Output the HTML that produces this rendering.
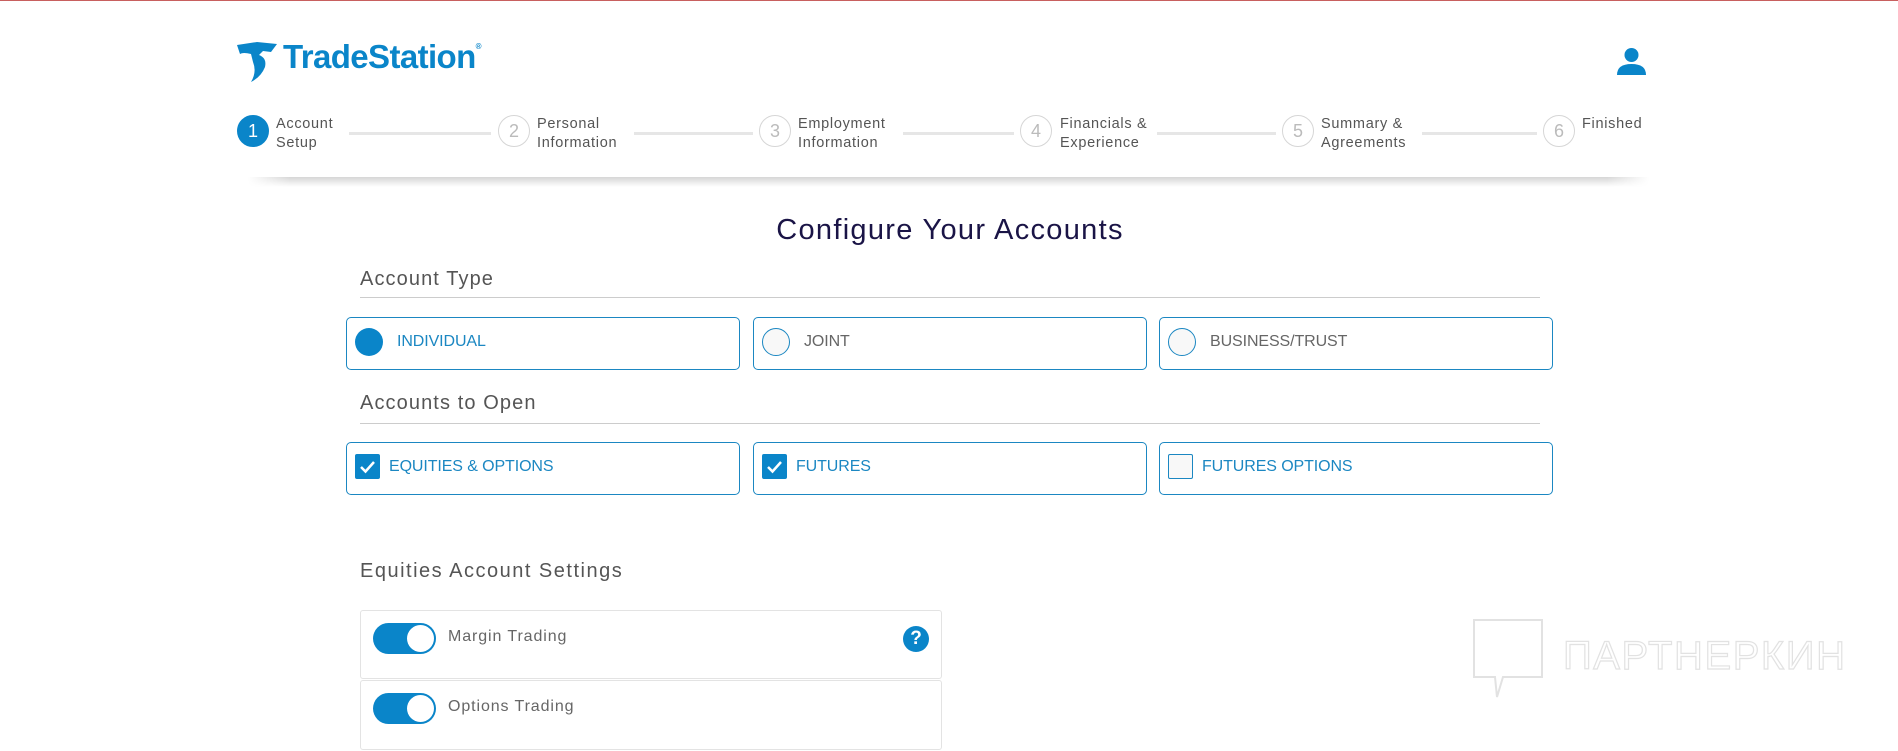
<!DOCTYPE html>
<html><head><meta charset="utf-8"><style>
*{margin:0;padding:0;box-sizing:border-box}
body{width:1898px;height:751px;background:#fff;position:relative;overflow:hidden;font-family:"Liberation Sans",sans-serif;color:#555}
.a{position:absolute}
.sh{left:248px;top:177px;width:1401px;height:10px;background:linear-gradient(rgba(0,0,0,.16),rgba(0,0,0,0));-webkit-mask-image:linear-gradient(90deg,transparent,#000 3%,#000 97%,transparent);mask-image:linear-gradient(90deg,transparent,#000 3%,#000 97%,transparent)}
.c{width:32px;height:32px;border-radius:50%;border:1px solid #d6d6d6;color:#bbb;font-size:18px;text-align:center;line-height:30px;top:115px}
.lab{top:115px;font-size:14.5px;line-height:19px;color:#555;letter-spacing:.7px}
.ln{top:132px;height:3px;background:#e6e6e6}
.h{font-size:20px;color:#555;left:360px;letter-spacing:1.1px}
.rule{left:360px;width:1180px;height:1px;background:#ccc}
.box{border:1.5px solid #1b87c2;border-radius:5px;height:53px;width:394px}
.bt{font-size:16px;color:#1b87c2;letter-spacing:-.1px}
.card{left:360px;width:582px;height:69px;border:1px solid #e3e3e3;border-radius:3px}
.tg{width:63px;height:31px;border-radius:16px;background:#0a85c9;left:12px;top:12px}
.tg:after{content:"";position:absolute;right:2px;top:2px;width:27px;height:27px;border-radius:50%;background:#fff}
.ct{left:87px;top:17px;font-size:16px;color:#666;letter-spacing:.9px}
.ck{width:25px;height:25px;border-radius:2px;background:#0a85c9}
</style></head><body>
<div class="a sh"></div>
<div class="a" style="left:0;top:0;width:1898px;height:1px;background:#c8605f"></div>
<svg class="a" style="left:237px;top:42px" width="44" height="40" viewBox="0 0 44 40"><path d="M0 3 L20 0 L40 2 L34 10 L26 9 L22 13 Q30 16 28 25 Q24 35 14 40 Q20 30 16 20 L14 12 Q6 10 3 12 Z" fill="#0a85c9"/></svg>
<div class="a" style="left:283px;top:38px;font-size:33px;font-weight:bold;color:#0a85c9;letter-spacing:-.6px">TradeStation<span style="font-size:8px;vertical-align:top;position:relative;top:4px">®</span></div>
<svg class="a" style="left:1617px;top:48px" width="29" height="27" viewBox="0 0 29 27"><circle cx="14.5" cy="7" r="7" fill="#0a85c9"/><path d="M0 27 Q0 16 14.5 16 Q29 16 29 27Z" fill="#0a85c9"/></svg>
<div class="a c" style="left:237px;background:#0a85c9;border-color:#0a85c9;color:#fff">1</div>
<div class="a lab" style="left:276px">Account<br>Setup</div>
<div class="a ln" style="left:349px;width:142px"></div>
<div class="a c" style="left:498px">2</div>
<div class="a lab" style="left:537px">Personal<br>Information</div>
<div class="a ln" style="left:634px;width:119px"></div>
<div class="a c" style="left:759px">3</div>
<div class="a lab" style="left:798px">Employment<br>Information</div>
<div class="a ln" style="left:903px;width:111px"></div>
<div class="a c" style="left:1020px">4</div>
<div class="a lab" style="left:1060px">Financials &amp;<br>Experience</div>
<div class="a ln" style="left:1157px;width:119px"></div>
<div class="a c" style="left:1282px">5</div>
<div class="a lab" style="left:1321px">Summary &amp;<br>Agreements</div>
<div class="a ln" style="left:1422px;width:115px"></div>
<div class="a c" style="left:1543px">6</div>
<div class="a lab" style="left:1582px">Finished</div>
<div class="a" style="left:0;width:1898px;top:214px;text-align:center;font-size:29px;color:#1a1446;padding-left:2px;letter-spacing:1.3px">Configure Your Accounts</div>
<div class="a h" style="top:268px">Account Type</div>
<div class="a rule" style="top:297px"></div>
<div class="a box" style="left:346px;top:317px"><div class="a" style="left:8px;top:10px;width:28px;height:28px;border-radius:50%;background:#0a85c9"></div><div class="a bt" style="left:50px;top:15px">INDIVIDUAL</div></div>
<div class="a box" style="left:753px;top:317px"><div class="a" style="left:8px;top:10px;width:28px;height:28px;border-radius:50%;border:1.5px solid #1b87c2;background:#f8f8f8"></div><div class="a bt" style="left:50px;top:15px;color:#666">JOINT</div></div>
<div class="a box" style="left:1159px;top:317px"><div class="a" style="left:8px;top:10px;width:28px;height:28px;border-radius:50%;border:1.5px solid #1b87c2;background:#f8f8f8"></div><div class="a bt" style="left:50px;top:15px;color:#666">BUSINESS/TRUST</div></div>
<div class="a h" style="top:392px">Accounts to Open</div>
<div class="a rule" style="top:423px"></div>
<div class="a box" style="left:346px;top:442px"><svg class="a ck" style="left:8px;top:11px" viewBox="0 0 25 25"><path d="M6 13 L10.5 17.5 L19 8" stroke="#fff" stroke-width="2.5" fill="none"/></svg><div class="a bt" style="left:42px;top:15px">EQUITIES &amp; OPTIONS</div></div>
<div class="a box" style="left:753px;top:442px"><svg class="a ck" style="left:8px;top:11px" viewBox="0 0 25 25"><path d="M6 13 L10.5 17.5 L19 8" stroke="#fff" stroke-width="2.5" fill="none"/></svg><div class="a bt" style="left:42px;top:15px">FUTURES</div></div>
<div class="a box" style="left:1159px;top:442px"><div class="a" style="left:8px;top:11px;width:25px;height:25px;border:1.5px solid #1b87c2;border-radius:2px;background:#f8f8f8"></div><div class="a bt" style="left:42px;top:15px">FUTURES OPTIONS</div></div>
<div class="a h" style="top:560px;letter-spacing:1.5px">Equities Account Settings</div>
<div class="a card" style="top:610px"><div class="a tg"></div><div class="a ct">Margin Trading</div><div class="a" style="left:542px;top:15px;width:26px;height:26px;border-radius:50%;background:#0a85c9;color:#fff;font-weight:bold;font-size:19px;text-align:center;line-height:26px">?</div></div>
<div class="a card" style="top:680px;height:70px"><div class="a tg"></div><div class="a ct">Options Trading</div></div>
<svg class="a" style="left:1471px;top:617px" width="390" height="82" viewBox="0 0 390 82"><path d="M3 3 H71 V60 H32 L26 80 L24 60 H3 Z" fill="none" stroke="#e2e2e2" stroke-width="2"/><text x="92" y="52" font-size="40" font-family="Liberation Sans" fill="none" stroke="#e2e2e2" stroke-width="1.2" textLength="282">ПАРТНЕРКИН</text></svg>
</body></html>
